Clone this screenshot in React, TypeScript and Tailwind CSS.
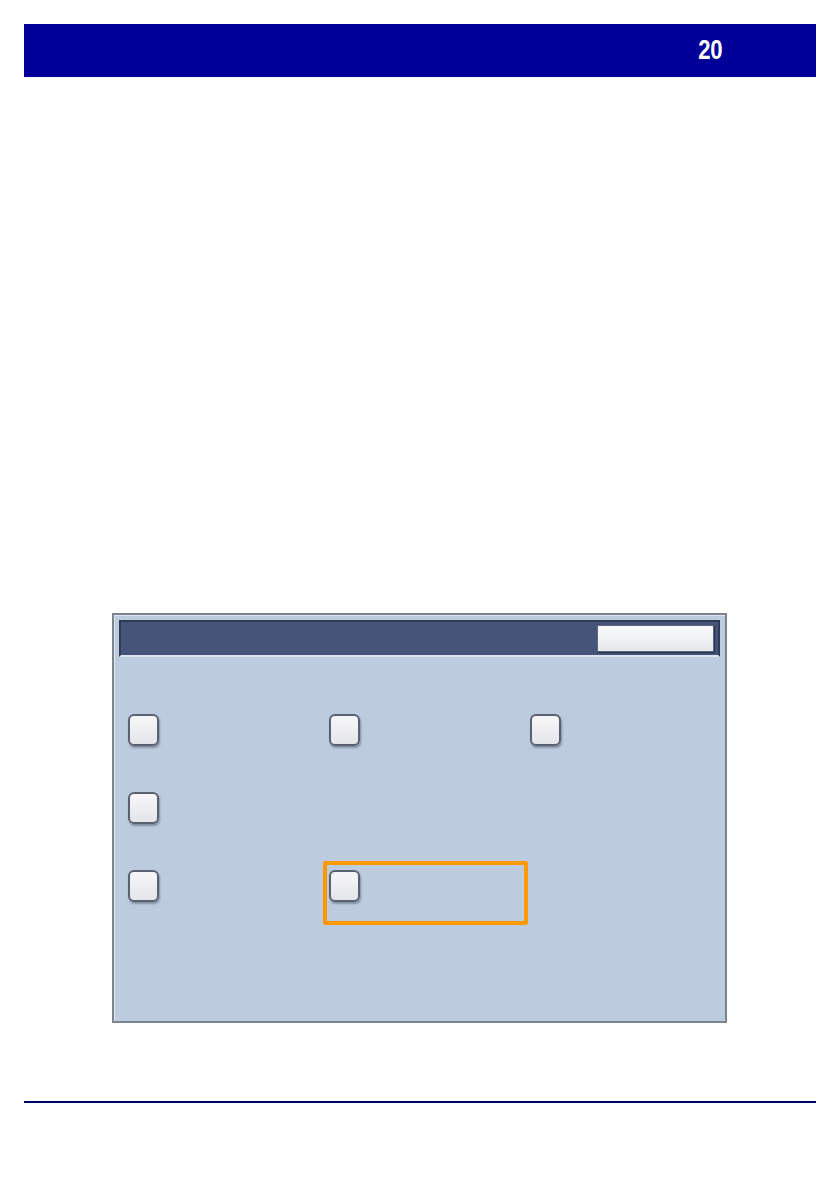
import React from "react";

type Cell = { id: string; highlight?: boolean };

const rows: (Cell | null)[][] = [
  [{ id: "a" }, { id: "b" }, { id: "c" }],
  [{ id: "d" }, null, null],
  [{ id: "e" }, { id: "f", highlight: true }, null],
];

function Box() {
  return (
    <div className="w-[31px] h-[32px] rounded-[6px] border-2 border-[#5a6272] bg-gradient-to-b from-[#f7f7f9] to-[#e4e5ea] shadow-[1px_2px_2px_rgba(60,70,90,0.45)]" />
  );
}

export default function App() {
  return (
    <div className="w-[840px] h-[1190px] bg-white overflow-hidden" style={{ fontFamily: '"Liberation Sans", Arial, sans-serif' }}>
      <div className="mx-[24px] mt-[24px] h-[53px] bg-[#000099] flex items-center justify-end pr-[94px]">
        <span
          className="text-white font-bold text-[27px] leading-none tracking-[-0.5px] inline-block origin-right scale-x-[0.82]"
          style={{ fontFamily: '"Liberation Sans Narrow", "Liberation Sans", Arial, sans-serif' }}
        >
          20
        </span>
      </div>

      <div className="ml-[112px] mt-[536px] w-[615px] h-[410px] border-2 border-[#7d8390] bg-[#bccbdd] shadow-[inset_1px_1px_0_#dfe6ef]">
        <div className="mx-[5px] mt-[5px] h-[37px] bg-[#46547a] border-2 border-[#2f3a55] border-b-[#dce4ee] flex items-center justify-end pr-[4px]">
          <div className="w-[117px] h-[27px] bg-gradient-to-b from-[#fbfbfc] to-[#e6e8ec] border border-[#5b6680] shadow-[1px_1px_1px_rgba(20,30,50,0.6)]" />
        </div>

        <div className="ml-[7px] mt-[49px] grid grid-cols-[201px_201px_201px] gap-y-[15px]">
          {rows.map((r, i) =>
            r.map((c, j) => (
              <div key={`${i}-${j}`} className="relative h-[63px] pl-[7px] pt-[8px]">
                {c && <Box />}
                {c?.highlight && (
                  <div className="absolute left-[1px] top-[-1px] w-[205px] h-[64px] border-4 border-[#ff9900] rounded-[2px]" />
                )}
              </div>
            ))
          )}
        </div>
      </div>

      <div className="mx-[24px] mt-[78px] h-[2px] bg-[#000066]" />
    </div>
  );
}
